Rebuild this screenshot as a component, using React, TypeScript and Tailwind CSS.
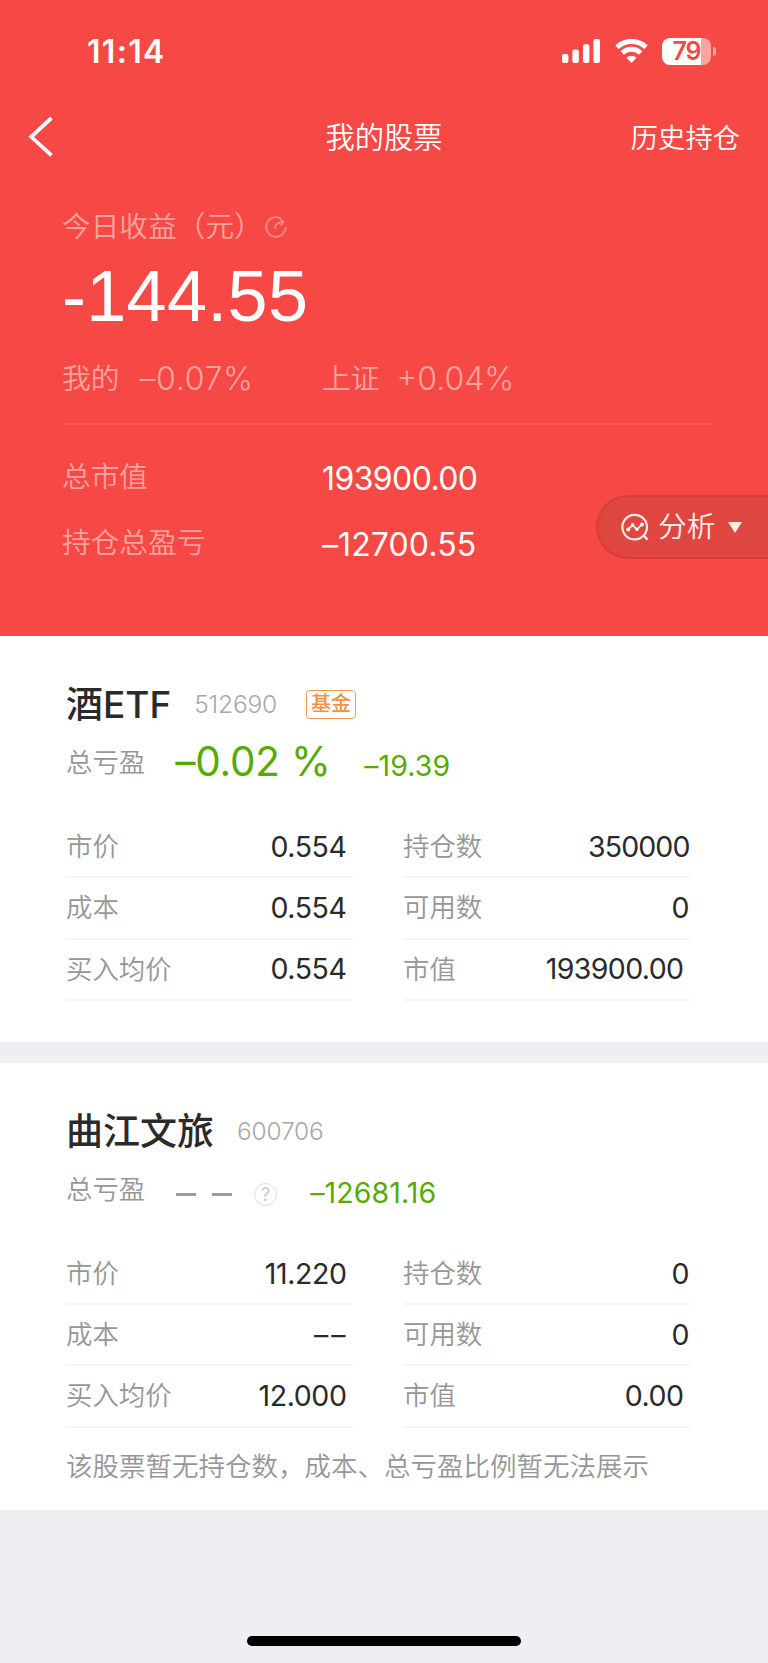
import { clsx } from "clsx";

type Field = { label: string; value: string; className?: string };

type Holding = {
  name: string;
  code: string;
  tag?: string;
  percent?: string;
  profit: string;
  left: Field[];
  right: Field[];
  note?: string;
};

const holdings: Holding[] = [
  {
    name: "酒ETF",
    code: "512690",
    tag: "基金",
    percent: "–0.02 %",
    profit: "–19.39",
    left: [
      { label: "市价", value: "0.554" },
      { label: "成本", value: "0.554" },
      { label: "买入均价", value: "0.554" },
    ],
    right: [
      { label: "持仓数", value: "350000", className: "tracking-[-0.9px]" },
      { label: "可用数", value: "0", className: "tracking-normal" },
      { label: "市值", value: "193900.00", className: "pr-[6px] tracking-[-0.6px]" },
    ],
  },
  {
    name: "曲江文旅",
    code: "600706",
    profit: "–12681.16",
    left: [
      { label: "市价", value: "11.220" },
      { label: "成本", value: "––", className: "pr-[4px] tracking-[3px]" },
      { label: "买入均价", value: "12.000" },
    ],
    right: [
      { label: "持仓数", value: "0", className: "tracking-normal" },
      { label: "可用数", value: "0", className: "tracking-normal" },
      { label: "市值", value: "0.00", className: "pr-[6px] tracking-[-0.5px]" },
    ],
    note: "该股票暂无持仓数，成本、总亏盈比例暂无法展示",
  },
];

function StatusBar() {
  return (
    <div className="flex h-[102px] items-center pl-[87px] pr-[52px]">
      <span className="pt-[2px] text-[32px] font-semibold leading-none tracking-[1.3px]">11:14</span>
      <div className="ml-auto flex items-center">
        <svg width="39" height="24" viewBox="0 0 39 24" fill="currentColor">
          <rect x="0" y="15" width="6.4" height="9" rx="2" />
          <rect x="10.4" y="10.5" width="6.4" height="13.5" rx="2" />
          <rect x="21" y="5.3" width="6.4" height="18.7" rx="2" />
          <rect x="31.4" y="0" width="6.6" height="24" rx="2" />
        </svg>
        <svg className="ml-[14px]" width="33" height="24" viewBox="0 0 33 24" fill="none">
          <path d="M2 8.2a21 21 0 0 1 29 0" stroke="currentColor" strokeWidth="5" />
          <path d="M7.3 13.9a13.4 13.4 0 0 1 18.4 0" stroke="currentColor" strokeWidth="4.8" />
          <path d="M16.5 24l-5-5.2a7.4 7.4 0 0 1 10 0z" fill="currentColor" />
        </svg>
        <div className="ml-[14px] h-[27px] w-[49px] rounded-[8px] bg-linear-to-r from-white from-80% to-white/50 to-80% text-center text-[25px] font-semibold leading-[27px] tracking-[-1px] text-[#f64844]">
          79
        </div>
        <div className="ml-[2px] h-[9px] w-[3px] rounded-r-full bg-white/50" />
      </div>
    </div>
  );
}

function AnalyzeButton() {
  return (
    <button className="absolute right-0 top-[495px] flex h-16 w-[172px] items-center rounded-l-full border-2 border-r-0 border-[#d83d3b] bg-[#de463f] pl-[23px] text-white/90">
      <svg width="28" height="28" viewBox="0 0 28 28" fill="none" stroke="currentColor" strokeWidth="2.2">
        <path d="M22.6 22.6a12.3 12.3 0 1 1 2.2-3.2c-.5 1.2-1.2 2.2-2.2 3.2l4 4" />
        <path d="M7.2 16.4l4.4-4.4 4.4 4.4 5-5" strokeWidth="1.8" />
        <g fill="currentColor" stroke="none">
          <circle cx="7.2" cy="16.4" r="2" />
          <circle cx="11.6" cy="11.8" r="1.7" />
          <circle cx="16" cy="16.4" r="1.7" />
          <circle cx="21" cy="11.4" r="2" />
        </g>
      </svg>
      <span className="ml-[9px] text-[28.7px] font-[350] leading-none">分析</span>
      <svg className="ml-[13px]" width="14" height="11" viewBox="0 0 14 11" fill="currentColor">
        <path d="M0 0h14L7 11z" />
      </svg>
    </button>
  );
}

function Summary() {
  return (
    <header className="relative h-[636px] bg-[#f64844] text-white">
      <StatusBar />

      <nav className="grid h-[70px] grid-cols-[1fr_auto_1fr] items-center px-7">
        <svg width="26" height="42" viewBox="0 0 26 42" fill="none">
          <path d="M23.5 2L3.2 20.8l20.3 18.5" stroke="currentColor" strokeWidth="3.8" />
        </svg>
        <h1 className="pt-[2px] text-[29.3px] font-[350] leading-none">我的股票</h1>
        <span className="justify-self-end pt-[3px] text-[27.3px] font-[350] leading-none">历史持仓</span>
      </nav>

      <div className="px-[62px]">
        <div className="flex h-[110px] items-center text-[28.7px] font-[350] leading-none text-white/50">
          今日收益（元）
          <svg className="ml-[2px] opacity-70" width="22" height="22" viewBox="0 0 22 22" fill="none" stroke="currentColor" strokeWidth="1.8">
            <path d="M15.5 2.2A9.8 9.8 0 1 0 20.8 11" />
            <path d="M10 13c0-4 2.6-7 8-7.2M14.8 2.8L18.5 5.8 15.6 9.5" />
          </svg>
        </div>
        <div className="-mt-[22px] font-['Liberation_Sans',sans-serif] text-[72px] leading-[72px] tracking-[0.3px]">-144.55</div>

        <div className="mt-[16px] flex h-[62px] text-[28.7px] font-[350] leading-[62px] text-white/50">
          <div className="flex w-[260px]">
            我的<span className="ml-5 text-[32px] tracking-[0.7px]">–0.07%</span>
          </div>
          <div className="flex">
            上证<span className="ml-[17px] text-[32px]">+0.04%</span>
          </div>
        </div>
        <div className="mt-[13px] h-[2px] w-[649px] bg-white/10" />

        <div className="mt-[19px] text-[28.7px]">
          <div className="flex h-[66px] leading-[66px]">
            <span className="w-[260px] font-[350] text-white/50">总市值</span>
            <span className="pt-[2px] text-[32px] tracking-[-0.6px]">193900.00</span>
          </div>
          <div className="flex h-[66px] leading-[66px]">
            <span className="w-[260px] font-[350] text-white/50">持仓总盈亏</span>
            <span className="pt-[2px] text-[32px] tracking-[0.1px]">–12700.55</span>
          </div>
        </div>
      </div>

      <AnalyzeButton />
    </header>
  );
}

function FieldList({ fields, pad }: { fields: Field[]; pad: string }) {
  return (
    <dl className="text-[26.4px]">
      {fields.map((f) => (
        <div
          key={f.label}
          className="flex h-[61.3px] items-center justify-between border-b-2 border-[#f5f5f6] leading-none"
        >
          <dt className="pb-[1px] font-[350] text-[#969696]">{f.label}</dt>
          <dd className={clsx("pt-[1px] text-[28.5px] text-[#2a2a2a]", f.className ?? pad)}>{f.value}</dd>
        </div>
      ))}
    </dl>
  );
}

function HoldingCard({ holding }: { holding: Holding }) {
  return (
    <section className="bg-white px-[66px] pb-[41px] pt-[44px]">
      <div className="flex h-[50px] items-center leading-none">
        <h2 className="text-[37px] font-medium leading-[50px] text-[#2a2a2a]">{holding.name}</h2>
        <span className="ml-[23px] pb-[2px] text-[24.5px] font-light tracking-[-0.2px] text-[#a8a8a8]">
          {holding.code}
        </span>
        {holding.tag && (
          <span className="mb-[2px] ml-[29px] rounded-[4px] border-[1.5px] border-[#f59a4c] px-[4px] text-[20px] font-medium leading-[27px] text-[#f58f3c]">
            {holding.tag}
          </span>
        )}
      </div>

      <div className="flex h-[87px] pt-[7px] text-[26.4px] leading-[50px] text-[#56ab00]">
        <span className="font-[350] text-[#969696]">总亏盈</span>
        {holding.percent ? (
          <span className="ml-[30px] w-[189px] whitespace-nowrap text-[40.5px] tracking-[-0.2px]">{holding.percent}</span>
        ) : (
          <div className="ml-[31px] mt-[6px] flex h-[50px] w-[134px] items-center">
            <span className="h-[3px] w-5 bg-[#9b9b9b]" />
            <span className="ml-4 h-[3px] w-5 bg-[#9b9b9b]" />
            <span className="ml-[22px] flex size-[23px] items-center justify-center rounded-full border-[1.5px] border-[#dcdcdc] text-[18px] leading-none text-[#c8c8c8]">
              ?
            </span>
          </div>
        )}
        <span className="pt-[4px] text-[28.5px] tracking-[0.1px]">{holding.profit}</span>
      </div>

      <div className="grid grid-cols-[286.5px_286.5px] gap-x-[50.5px]">
        <FieldList fields={holding.left} pad="pr-[6px] tracking-[-0.4px]" />
        <FieldList fields={holding.right} pad="pr-0" />
      </div>

      {holding.note && (
        <p className="-mb-[18px] mt-[17px] whitespace-nowrap text-[26.5px] font-[350] leading-[42px] text-[#969696]">
          {holding.note}
        </p>
      )}
    </section>
  );
}

export default function App() {
  return (
    <div className="flex h-[1663px] w-[768px] flex-col overflow-hidden bg-[#efeef3] font-[Inter,'Noto_Sans_CJK_SC',sans-serif]">
      <Summary />
      <main className="flex flex-col gap-[21px]">
        {holdings.map((h) => (
          <HoldingCard key={h.code} holding={h} />
        ))}
      </main>
      <div className="mx-auto mb-[17px] mt-auto h-[10px] w-[274px] rounded-full bg-black" />
    </div>
  );
}
